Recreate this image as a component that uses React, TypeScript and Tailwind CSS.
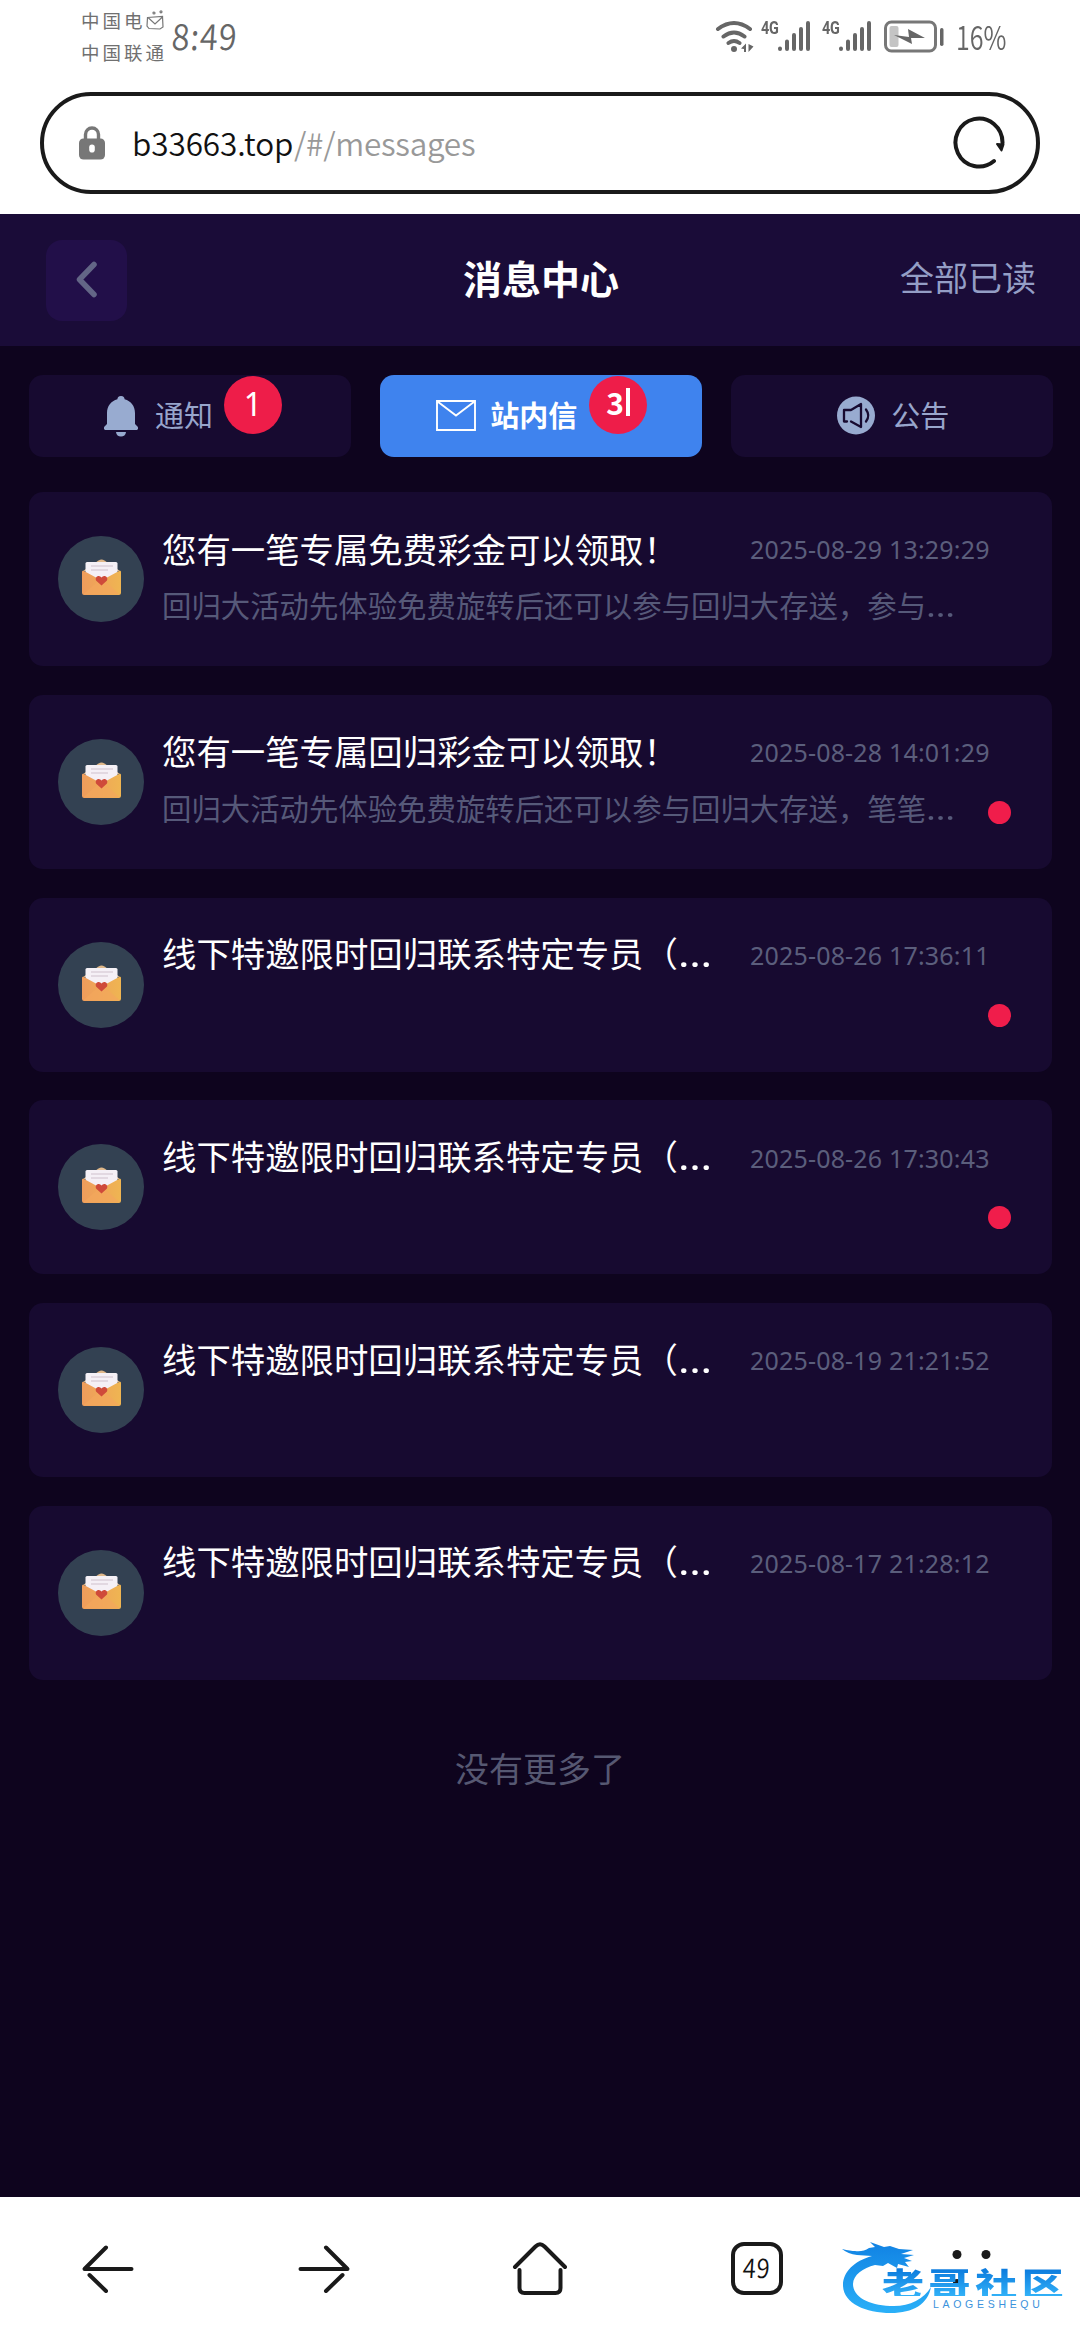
import React from "react";

const messages = [
  { title: "您有一笔专属免费彩金可以领取！", cut: false, date: "2025-08-29 13:29:29", body: "回归大活动先体验免费旋转后还可以参与回归大存送，参与", unread: false },
  { title: "您有一笔专属回归彩金可以领取！", cut: false, date: "2025-08-28 14:01:29", body: "回归大活动先体验免费旋转后还可以参与回归大存送，笔笔", unread: true },
  { title: "线下特邀限时回归联系特定专员（", cut: true, date: "2025-08-26 17:36:11", body: "", unread: true },
  { title: "线下特邀限时回归联系特定专员（", cut: true, date: "2025-08-26 17:30:43", body: "", unread: true },
  { title: "线下特邀限时回归联系特定专员（", cut: true, date: "2025-08-19 21:21:52", body: "", unread: false },
  { title: "线下特邀限时回归联系特定专员（", cut: true, date: "2025-08-17 21:28:12", body: "", unread: false },
];

function Signal() {
  return (
    <div className="flex h-[32px] w-[50px] items-start">
      <span className="w-[17px] origin-left font-['Roboto',sans-serif] text-[19px] leading-[16px] font-bold tracking-[-0.500px] [transform:scaleX(0.76)]">4G</span>
      <svg width="33" height="32" viewBox="0 0 33 32" className="shrink-0" stroke="#666" strokeWidth="4" strokeLinecap="round">
        <path d="M2 28.500v.500M9 21.500v7.500M16 15v14M23 9v20M30 3v26" />
      </svg>
    </div>
  );
}

function StatusBar() {
  return (
    <div className="flex h-[92px] items-start justify-between pr-[75px] pl-[81px] text-[#666]">
      <div className="flex">
        <div className="flex w-[91px] flex-col pt-[10px] text-[18.500px] leading-[32px] tracking-[3px] whitespace-nowrap text-[#707070]">
          <div className="-mt-[6px] flex h-[32px] items-center">
            <span>中国电</span>
            <svg width="18" height="20" viewBox="0 0 18 20" fill="none" stroke="#777" strokeWidth="1.200">
              <path d="M1.500 7.500 16.500 6.500 17 17 14 19 3 18.500 1 16zM2 7.500 9 14l8-7.500" />
              <circle cx="8" cy="3" r="1" />
              <circle cx="15" cy="1.800" r="1" />
            </svg>
          </div>
          <div className="h-[32px]">中国联通</div>
        </div>
        <div className="origin-left pt-[12px] text-[36px] leading-[44px] tracking-[1px] [font-weight:350] [transform:scaleX(0.9)_skewX(-4deg)]">8:49</div>
      </div>
      <div className="flex items-start pt-[20px]">
        <svg width="40" height="34" viewBox="0 0 40 34" fill="none" stroke="#666" strokeWidth="4" strokeLinecap="round" className="mr-[6px]">
          <path d="M3 9q16-12 32 0M8.500 16.500q10.500-8 21 0M13.500 23q5.500-4 11 0" />
          <circle cx="19" cy="29" r="3" fill="#666" stroke="none" />
          <path d="M31 23.500v8.500h-2v-3l-3-.5zM33.500 24v8l5-5.500z" fill="#666" stroke="none" />
        </svg>
        <Signal />
        <div className="w-[11px]" />
        <Signal />
        <svg width="60" height="34" viewBox="0 0 60 34" className="ml-[12px]">
          <rect x="1.500" y="2" width="50" height="29" rx="6" fill="none" stroke="#777" strokeWidth="3" />
          <rect x="5.500" y="6" width="9" height="21" rx="2" fill="#c4c4c4" />
          <path d="M10 15l15 2-1-8 17 9-14 0 1 6z" fill="#666" />
          <rect x="56" y="8" width="3.500" height="18" rx="1.700" fill="#666" />
        </svg>
        <div className="-mt-[6px] ml-[12px] w-[49px] origin-left text-[33px] leading-[44px] [font-weight:350] [transform:scaleX(0.76)]">16%</div>
      </div>
    </div>
  );
}

function AddressBar() {
  return (
    <div className="mx-[40px] flex h-[102px] items-center rounded-full border-4 border-[#1a1a1a] pr-[31px] pl-[35px]">
      <svg width="26" height="34" viewBox="0 0 26 34">
        <path d="M6.500 15V8.500a6.500 6.500 0 0 1 13 0V15" fill="none" stroke="#777" strokeWidth="3.400" />
        <rect x="0" y="12.500" width="26" height="21" rx="4.500" fill="#777" />
        <rect x="10.200" y="18.500" width="5.600" height="8" rx="2.800" fill="#fff" />
      </svg>
      <div className="-mt-[3px] ml-[27px] flex flex-1 text-[31.500px] leading-[44px] [font-weight:350]">
        <span className="w-[162px] tracking-[-0.100px] text-[#111]">b33663.top</span>
        <span className="tracking-[-0.250px] text-[#999]">/#/messages</span>
      </div>
      <svg width="52" height="54" viewBox="0 0 52 54" fill="none" stroke="#1a1a1a" strokeWidth="4" strokeLinecap="round">
        <path d="M41 45A23.500 24 0 1 1 49.500 27" />
        <path d="M44 28l6.500.500-2 6z" fill="#1a1a1a" strokeWidth="2" strokeLinejoin="round" />
      </svg>
    </div>
  );
}

function Header() {
  return (
    <div className="grid h-[132px] grid-cols-3 items-center bg-[#1a0c38] pr-[44px] pl-[46px]">
      <div className="flex size-[81px] items-center justify-center rounded-[16px] bg-[#220f49]">
        <svg width="22" height="37" viewBox="0 0 22 37" fill="none" stroke="#636686" strokeWidth="5.500" strokeLinecap="round" strokeLinejoin="round" className="-mt-[2px]">
          <path d="M18 3.500 3.500 18.500 18 33.500" />
        </svg>
      </div>
      <div className="-mt-[6px] text-center text-[39px] leading-[56px] font-bold text-white">消息中心</div>
      <div className="-mt-[6px] text-right text-[34px] leading-[50px] text-[#949ec5]">全部已读</div>
    </div>
  );
}

function Tabs() {
  return (
    <div className="mt-[29px] grid grid-cols-3 gap-[29.500px] pr-[27px] pl-[29px] text-[29px] leading-[42px] text-[#98a5cb]">
      <div className="relative flex h-[82px] items-center rounded-[14px] bg-[#170a30] pl-[75px]">
        <svg width="34" height="41" viewBox="0 0 34 41" fill="#98abd0">
          <path d="M17 0c2.600 0 3.500 1.800 3.600 3.200C27 5 31 10 31 17v11l2.500 2.500c1.200 1.400.500 3.500-1.500 3.500H2C0 34 -.7 31.900.5 30.500L3 28V17C3 10 7 5 13.400 3.200 13.500 1.800 14.400 0 17 0zM12 36h10c-.3 3-2.300 4.500-5 4.500S12.300 39 12 36z" />
        </svg>
        <span className="-mt-[4px] ml-[17px]">通知</span>
        <span className="absolute top-[1px] left-[195px] flex size-[58px] items-center justify-center rounded-full bg-[#ee1d49] pb-[3px] font-['Noto_Sans',sans-serif] text-[32px] text-white">1</span>
      </div>
      <div className="relative flex h-[82px] items-center rounded-[14px] bg-[#3f83ee] pl-[56px] font-bold text-white">
        <svg width="40" height="31" viewBox="0 0 40 31" fill="none" stroke="#fff" strokeWidth="1.900" className="-mt-[1px]">
          <path d="M1 1h38v29H1zM1.500 1.500 20 15.500 38.500 1.500" />
        </svg>
        <span className="-mt-[4px] ml-[14px]">站内信</span>
        <span className="absolute top-[1px] left-[209px] flex size-[58px] items-center justify-center rounded-full bg-[#ee1d49] pb-[6px] text-[30px]">
          3<span className="ml-[2px] h-[28px] w-[4px] bg-white" />
        </span>
      </div>
      <div className="flex h-[82px] items-center rounded-[14px] bg-[#170a30] pl-[106px]">
        <svg width="38" height="39" viewBox="0 0 38 39" fill="none" stroke="#170a30" strokeWidth="2.300" strokeLinecap="round" strokeLinejoin="round" className="-mt-[2px]">
          <circle cx="19" cy="19.500" r="19" fill="#98abd0" stroke="none" />
          <path d="M10 25.500H7V14h7l10-6v23l-10-5.500M29 13.500q4.500 6 0 12" />
        </svg>
        <span className="-mt-[4px] ml-[16px]">公告</span>
      </div>
    </div>
  );
}

function MailIcon() {
  return (
    <svg width="39" height="37" viewBox="0 0 39 37">
      <defs>
        <linearGradient id="env" x1="0" y1="0" x2="1" y2="0">
          <stop offset="0" stopColor="#ef9c5c" />
          <stop offset="1" stopColor="#efb552" />
        </linearGradient>
      </defs>
      <path d="M1 12 16.500 1.500Q19.500-.5 22.500 1.500L38 12z" fill="#e0b88a" />
      <path d="M3.500 4.500Q3.500 3 5 3h29q1.500 0 1.500 1.500V26h-32z" fill="#f5f0f6" />
      <path d="M9 7h22M9 11h17" stroke="#dcd0da" strokeWidth="1.300" />
      <path d="M0 13q0-2 2-1l17.500 9.500L37 12q2-1 2 1v20.500q0 2.500-2.500 2.500h-34Q0 36 0 33.500z" fill="url(#env)" />
      <path d="M1 35.500 16 22.500h7L38 35.500z" fill="#f3a65c" opacity=".7" />
      <path d="M19.500 26.500 14 21.500q-1.200-3.500 2-4.500 2.300-.4 3.500 1.500Q20.700 16.600 23 17q3.200 1 2 4.500z" fill="#cf4a3a" />
    </svg>
  );
}

function Dots() {
  return <span className="inline-block origin-left font-['Noto_Sans',sans-serif] [transform:scaleX(1.25)]">…</span>;
}

function MessageCard({ m }: { m: (typeof messages)[number] }) {
  return (
    <div className="relative flex h-[174px] rounded-[14px] bg-[#170a30] pl-[29px]">
      <div className="mt-[44px] flex size-[86px] shrink-0 items-center justify-center rounded-full bg-[#334152] pb-[3px]">
        <MailIcon />
      </div>
      <div className="ml-[18px] w-[828px] pt-[30px]">
        <div className="flex h-[50px] items-center justify-between">
          <span className="pt-[1px] text-[34.400px] leading-[50px] whitespace-nowrap text-white">
            {m.title}
            {m.cut && <Dots />}
          </span>
          <span className="w-[240px] pt-[6px] font-['Noto_Sans',sans-serif] text-[25px] tracking-[0.180px] whitespace-nowrap text-[#5b5e7c]">{m.date}</span>
        </div>
        {m.body && (
          <div className="mt-[11px] text-[29.400px] leading-[42px] whitespace-nowrap text-[#565979]">
            {m.body}
            <Dots />
          </div>
        )}
      </div>
      {m.unread && <span className="absolute top-[106px] left-[959px] size-[23px] rounded-full bg-[#f01d4b]" />}
    </div>
  );
}

function Watermark() {
  return (
    <div className="absolute top-[44px] left-[842px] h-[78px] w-[224px]">
      <svg width="96" height="78" viewBox="0 0 96 78" className="absolute top-0 left-0">
        <defs>
          <linearGradient id="drg" x1="0" y1="0" x2="0" y2="1">
            <stop offset="0" stopColor="#1182e3" />
            <stop offset="1" stopColor="#2ab0f8" />
          </linearGradient>
        </defs>
        <path
          d="M30 15C12 20 1 31 1 44c0 18 22 28 48 28 22 0 37-9 40-26-7 12-21 19-37 19-23 0-41-8-41-22 0-9 10-16 22-19l8 1 5-3 9 5 1-4 11 3-4-5 7-1-8-3 10-3-13-1 12-4-14-1-9-3-6 1-14-5 5 5-6 1q-6 4-14 3Q9 10 0 8q6 5 15 6z"
          fill="url(#drg)"
        />
      </svg>
      <div className="absolute top-[22px] left-[40px] bg-gradient-to-b from-[#0a78dc] to-[#32b2f8] bg-clip-text text-[42px] leading-[38px] font-black tracking-[4.600px] whitespace-nowrap text-transparent [transform:scaleY(0.76)]">老哥社区</div>
      <div className="absolute top-[58px] left-[91px] font-['Liberation_Sans',sans-serif] text-[10.500px] leading-[10px] tracking-[3.700px] text-[#3b92dc]">LAOGESHEQU</div>
    </div>
  );
}

function BottomBar() {
  return (
    <div className="relative grid h-[143px] grid-cols-5 items-center justify-items-center bg-white">
      <svg width="52" height="48" viewBox="0 0 52 48" fill="none" stroke="#1a1a1a" strokeWidth="4" strokeLinecap="round" strokeLinejoin="round">
        <path d="M49.500 24H2.500L24 2.500M7.500 30 24 46" />
      </svg>
      <svg width="52" height="48" viewBox="0 0 52 48" fill="none" stroke="#1a1a1a" strokeWidth="4" strokeLinecap="round" strokeLinejoin="round">
        <path d="M2.500 24h47L28 2.500M44.500 30 28 46" />
      </svg>
      <svg width="56" height="54" viewBox="0 0 56 54" fill="none" stroke="#1a1a1a" strokeWidth="4" strokeLinecap="round" strokeLinejoin="round">
        <path d="M3 25 23.500 4.500Q28 0 32.500 4.500L53 25M7.500 28v18q0 5 5 5h31q5 0 5-5V28" />
      </svg>
      <div className="ml-[2px] flex h-[53px] w-[52px] items-center justify-center rounded-[13px] border-4 border-[#1a1a1a] pb-[4px] text-[27px] leading-none text-[#111] [font-weight:350]">
        <span className="tracking-[1px] [transform:scaleX(0.88)_skewX(-4deg)]">49</span>
      </div>
      <svg width="52" height="54" viewBox="0 0 52 54" fill="#1a1a1a">
        <circle cx="11" cy="12.500" r="4.500" />
        <circle cx="40" cy="12.500" r="4.500" />
        <circle cx="11" cy="41" r="4" />
      </svg>
      <Watermark />
    </div>
  );
}

export default function App() {
  return (
    <div className="flex h-[2340px] w-[1080px] flex-col overflow-hidden bg-white font-['Noto_Sans_CJK_SC',sans-serif]">
      <StatusBar />
      <AddressBar />
      <div className="mt-[20px] flex flex-1 flex-col bg-[#0e041e]">
        <Header />
        <Tabs />
        <div className="mt-[35px] flex flex-col gap-[28.800px] pr-[28px] pl-[29px]">
          {messages.map((m) => (
            <MessageCard key={m.date} m={m} />
          ))}
        </div>
        <div className="mt-[63px] text-center text-[34px] leading-[50px] text-[#565872]">没有更多了</div>
      </div>
      <BottomBar />
    </div>
  );
}
